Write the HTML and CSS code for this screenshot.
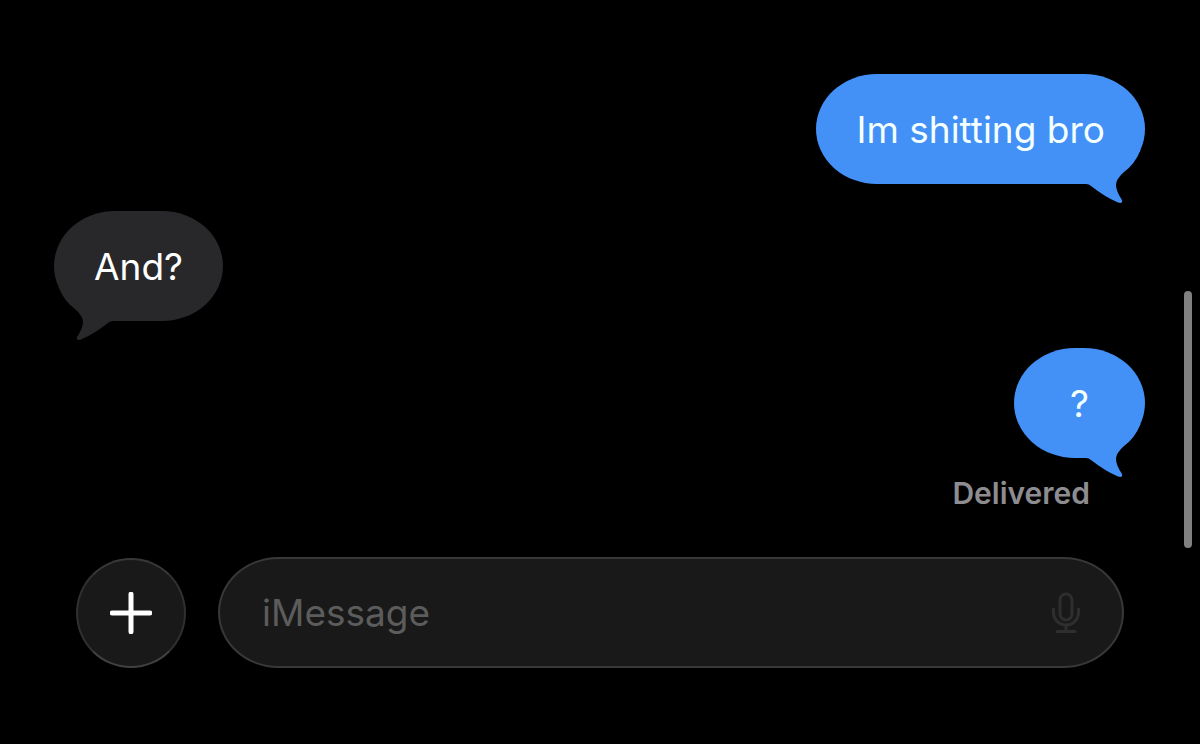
FILE: index.html
```html
<!DOCTYPE html>
<html lang="en">
<head>
<meta charset="utf-8">
<meta name="viewport" content="width=device-width, initial-scale=1">
<title>Messages</title>
<link rel="stylesheet" href="styles.css">
</head>
<body>
<main class="chat">
  <section class="thread" aria-label="Conversation">
    <div class="bubble sent">
      <span>Im shitting bro</span>
      <svg class="tail" viewBox="0 0 70 60" aria-hidden="true"><path d="M0 30V40H11Q14 40 16 42Q30 53 43 58.500Q48 60 47 56Q41 47 41 41Q41 35 49 28Q60 20 65.500 6L50 0Z"/></svg>
    </div>
    <div class="bubble received">
      <span>And?</span>
      <svg class="tail" viewBox="0 0 70 60" aria-hidden="true"><path d="M0 30V40H11Q14 40 16 42Q30 53 43 58.500Q48 60 47 56Q41 47 41 41Q41 35 49 28Q60 20 65.500 6L50 0Z"/></svg>
    </div>
    <div class="bubble sent">
      <span>?</span>
      <svg class="tail" viewBox="0 0 70 60" aria-hidden="true"><path d="M10 30V40H11Q14 40 16 42Q30 53 43 58.500Q48 60 47 56Q41 47 41 41Q41 35 49 28Q60 20 65.500 6L50 0Z"/></svg>
    </div>
  </section>
  <p class="status">Delivered</p>
  <form class="composer">
    <button class="add" type="button" aria-label="Add attachment">
      <svg class="plus" viewBox="0 0 42 42" aria-hidden="true"><path d="M21 2.200V39.800M2.200 21H39.800"/></svg>
    </button>
    <div class="field">
      <input class="text" type="text" placeholder="iMessage" aria-label="iMessage">
      <button class="dictate" type="button" aria-label="Dictate">
        <svg class="mic" viewBox="0 0 28 42" aria-hidden="true"><rect x="8" y="2" width="12" height="26" rx="6"/><path d="M1.500 17V20.500A12.500 12.500 0 0 0 26.500 20.500V17M14 33V39M5 39.500H23"/></svg>
      </button>
    </div>
  </form>
  <div class="scrollbar" aria-hidden="true"></div>
</main>
</body>
</html>
```
FILE: styles.css
```css
* { box-sizing: border-box; }

body {
  margin: 0;
  background: #000;
  color: #fff;
  font-family: Inter, "Liberation Sans", sans-serif;
}

.chat {
  position: relative;
  min-height: 100vh;
  padding-top: 74px;
}

.thread {
  display: flex;
  flex-direction: column;
  align-items: flex-start;
  gap: 27px;
  padding: 0 55px 0 54px;
}

.bubble {
  position: relative;
  display: flex;
  align-items: center;
  justify-content: center;
  min-width: 131px;
  min-height: 110px;
  padding: 2px 40px 0;
  border-radius: 61px / 55px;
  font-size: 37px;
  line-height: 48px;
}

.sent {
  align-self: flex-end;
  background: #4390f7;
  color: #f4ffff;
}

.received { background: #28282a; }

.tail {
  position: absolute;
  right: 0;
  bottom: -20px;
  width: 70px;
  height: 60px;
  fill: #4390f7;
}

.received .tail {
  right: auto;
  left: 0;
  transform: scaleX(-1);
  fill: #28282a;
}

.status {
  margin: 17px 110px 0 0;
  color: #8d8d91;
  font-size: 30px;
  font-weight: 600;
  line-height: 36px;
  text-align: right;
}

.composer {
  display: flex;
  align-items: center;
  gap: 32px;
  padding: 46px 76px 76px;
}

.add {
  display: grid;
  place-items: center;
  flex: none;
  width: 110px;
  height: 110px;
  padding: 0;
  border: 2px solid #303030;
  border-top-color: #383838;
  border-bottom-color: #414141;
  border-radius: 50%;
  background: #191919;
}

.plus {
  width: 42px;
  height: 42px;
  fill: none;
  stroke: #fff;
  stroke-width: 5;
  stroke-linecap: round;
}

.field {
  display: flex;
  align-items: center;
  flex: 1;
  min-width: 0;
  height: 111px;
  padding: 0 42px;
  border: 2px solid #383838;
  border-radius: 61px / 56px;
  background: #191919;
}

.text {
  flex: 1;
  min-width: 0;
  padding: 0;
  border: 0;
  outline: 0;
  background: none;
  color: #fff;
  font: inherit;
  font-size: 37px;
  line-height: 48px;
}

.text::placeholder {
  color: #5c5c5c;
  opacity: 1;
}

.dictate {
  display: grid;
  padding: 0;
  border: 0;
  background: none;
}

.mic {
  width: 28px;
  height: 42px;
  fill: none;
  stroke: #2e2e2e;
  stroke-width: 3;
  stroke-linecap: round;
}

.scrollbar {
  position: absolute;
  top: 291px;
  right: 8px;
  width: 8px;
  height: 257px;
  border-radius: 4px;
  background: #808080;
}
```
